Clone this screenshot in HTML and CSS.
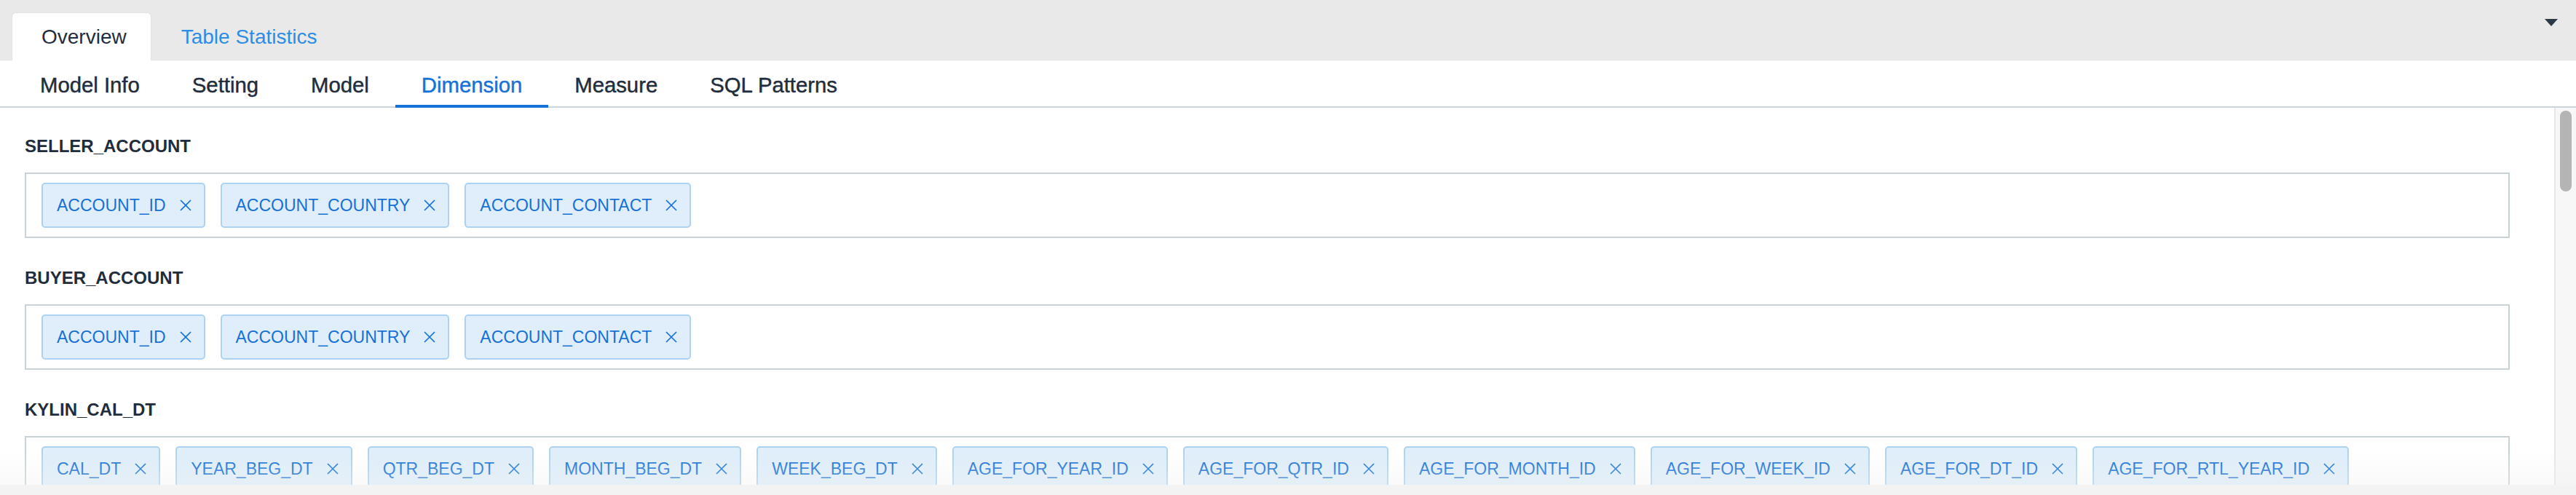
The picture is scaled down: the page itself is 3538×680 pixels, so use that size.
FILE: index.html
```html
<!DOCTYPE html>
<html lang="en">
<head>
<meta charset="utf-8">
<title>Model Overview - Dimension</title>
<link rel="stylesheet" href="styles.css">
</head>
<body>
<div class="app">
  <header class="topbar">
    <div class="toptabs">
      <div class="toptab active">Overview</div>
      <div class="toptab">Table Statistics</div>
    </div>
    <span class="caret"></span>
  </header>
  <nav class="subtabs">
    <div class="subtab">Model Info</div>
    <div class="subtab">Setting</div>
    <div class="subtab">Model</div>
    <div class="subtab active">Dimension</div>
    <div class="subtab">Measure</div>
    <div class="subtab">SQL Patterns</div>
  </nav>
  <div class="body">
    <main class="content">
      <section class="dim">
        <h3 class="dim-title">SELLER_ACCOUNT</h3>
        <div class="tagbox">
          <span class="tag">ACCOUNT_ID<svg class="x" viewBox="0 0 16 16"><path d="M1 1L15 15M15 1L1 15"/></svg></span>
          <span class="tag">ACCOUNT_COUNTRY<svg class="x" viewBox="0 0 16 16"><path d="M1 1L15 15M15 1L1 15"/></svg></span>
          <span class="tag">ACCOUNT_CONTACT<svg class="x" viewBox="0 0 16 16"><path d="M1 1L15 15M15 1L1 15"/></svg></span>
        </div>
      </section>
      <section class="dim">
        <h3 class="dim-title">BUYER_ACCOUNT</h3>
        <div class="tagbox">
          <span class="tag">ACCOUNT_ID<svg class="x" viewBox="0 0 16 16"><path d="M1 1L15 15M15 1L1 15"/></svg></span>
          <span class="tag">ACCOUNT_COUNTRY<svg class="x" viewBox="0 0 16 16"><path d="M1 1L15 15M15 1L1 15"/></svg></span>
          <span class="tag">ACCOUNT_CONTACT<svg class="x" viewBox="0 0 16 16"><path d="M1 1L15 15M15 1L1 15"/></svg></span>
        </div>
      </section>
      <section class="dim">
        <h3 class="dim-title">KYLIN_CAL_DT</h3>
        <div class="tagbox">
          <span class="tag">CAL_DT<svg class="x" viewBox="0 0 16 16"><path d="M1 1L15 15M15 1L1 15"/></svg></span>
          <span class="tag">YEAR_BEG_DT<svg class="x" viewBox="0 0 16 16"><path d="M1 1L15 15M15 1L1 15"/></svg></span>
          <span class="tag">QTR_BEG_DT<svg class="x" viewBox="0 0 16 16"><path d="M1 1L15 15M15 1L1 15"/></svg></span>
          <span class="tag">MONTH_BEG_DT<svg class="x" viewBox="0 0 16 16"><path d="M1 1L15 15M15 1L1 15"/></svg></span>
          <span class="tag">WEEK_BEG_DT<svg class="x" viewBox="0 0 16 16"><path d="M1 1L15 15M15 1L1 15"/></svg></span>
          <span class="tag">AGE_FOR_YEAR_ID<svg class="x" viewBox="0 0 16 16"><path d="M1 1L15 15M15 1L1 15"/></svg></span>
          <span class="tag">AGE_FOR_QTR_ID<svg class="x" viewBox="0 0 16 16"><path d="M1 1L15 15M15 1L1 15"/></svg></span>
          <span class="tag">AGE_FOR_MONTH_ID<svg class="x" viewBox="0 0 16 16"><path d="M1 1L15 15M15 1L1 15"/></svg></span>
          <span class="tag">AGE_FOR_WEEK_ID<svg class="x" viewBox="0 0 16 16"><path d="M1 1L15 15M15 1L1 15"/></svg></span>
          <span class="tag">AGE_FOR_DT_ID<svg class="x" viewBox="0 0 16 16"><path d="M1 1L15 15M15 1L1 15"/></svg></span>
          <span class="tag">AGE_FOR_RTL_YEAR_ID<svg class="x" viewBox="0 0 16 16"><path d="M1 1L15 15M15 1L1 15"/></svg></span>
        </div>
      </section>
    </main>
    <div class="scrollbar"><div class="thumb"></div></div>
    <div class="fade"></div>
  </div>
  <footer class="bottom"></footer>
</div>
</body>
</html>
```

FILE: styles.css
```css
* { box-sizing: border-box; }
html, body {
  margin: 0;
  padding: 0;
  height: 680px;
  overflow: hidden;
  background: #ffffff;
  font-family: "Liberation Sans", Arial, sans-serif;
  color: #1f2d3d;
}
.app {
  display: flex;
  flex-direction: column;
  height: 680px;
}
.topbar {
  height: 83px;
  flex: none;
  background: #e9e9e9;
  border-bottom: 1px solid #dde2e6;
  display: flex;
  justify-content: space-between;
  align-items: flex-start;
}
.toptabs {
  display: flex;
  padding: 17px 0 0 16px;
}
.toptab {
  height: 66px;
  padding: 0 40px;
  display: flex;
  align-items: center;
  font-size: 28px;
  color: #2f8ce3;
  border: 1px solid transparent;
  border-bottom: none;
  border-radius: 6px 6px 0 0;
}
.toptab.active {
  background: #ffffff;
  color: #1f2d3d;
  border-color: #dfe3e8;
  padding: 0 33px 0 40px;
}
.caret {
  margin: 26px 25px 0 0;
  width: 0;
  height: 0;
  border-left: 9px solid transparent;
  border-right: 9px solid transparent;
  border-top: 10px solid #2b3a46;
}
.subtabs {
  flex: none;
  height: 65px;
  display: flex;
  padding-left: 19px;
  border-bottom: 2px solid #ccd6da;
}
.subtab {
  height: 65px;
  padding: 6px 36px 0;
  line-height: 55px;
  font-size: 29.3px;
  color: #1f2d3d;
  border-bottom: 4px solid transparent;
  margin-bottom: -2px;
  -webkit-text-stroke: 0.45px currentColor;
}
.subtab.active {
  color: #1772d8;
  border-bottom-color: #1772d8;
}
.body {
  flex: 1;
  display: flex;
  position: relative;
  overflow: hidden;
}
.content {
  flex: 1;
  padding: 39px 61px 0 34px;
}
.dim { margin-bottom: 41px; }
.dim-title {
  margin: 0 0 22px;
  font-size: 24px;
  line-height: 28px;
  font-weight: bold;
  color: #1f2d3d;
}
.tagbox {
  border: 2px solid #c9d3d7;
  padding: 12px 21px;
  display: flex;
  flex-wrap: wrap;
  gap: 21px;
}
.tag {
  height: 62px;
  display: flex;
  align-items: center;
  gap: 19px;
  padding: 0 17px 0 19px;
  background: #dfeefa;
  border: 2px solid #acd3f3;
  border-radius: 5px;
  color: #1771d6;
  font-size: 23px;
  white-space: nowrap;
}
.x {
  width: 16px;
  height: 16px;
  fill: none;
  stroke: #1771d6;
  stroke-width: 1.7;
}
.scrollbar {
  flex: none;
  width: 30px;
  background: #f7f7f7;
  border-left: 2px solid #e6e6e6;
  padding: 4px 6px 0;
}
.thumb {
  width: 16px;
  height: 111px;
  background: #b4b4b4;
  border-radius: 8px;
}
.fade {
  position: absolute;
  left: 0;
  right: 0;
  bottom: 0;
  height: 46px;
  background: linear-gradient(to bottom, rgba(244,244,244,0), rgba(240,240,240,0.35));
  pointer-events: none;
}
.bottom {
  flex: none;
  height: 14px;
  background: #f3f3f3;
}
```
